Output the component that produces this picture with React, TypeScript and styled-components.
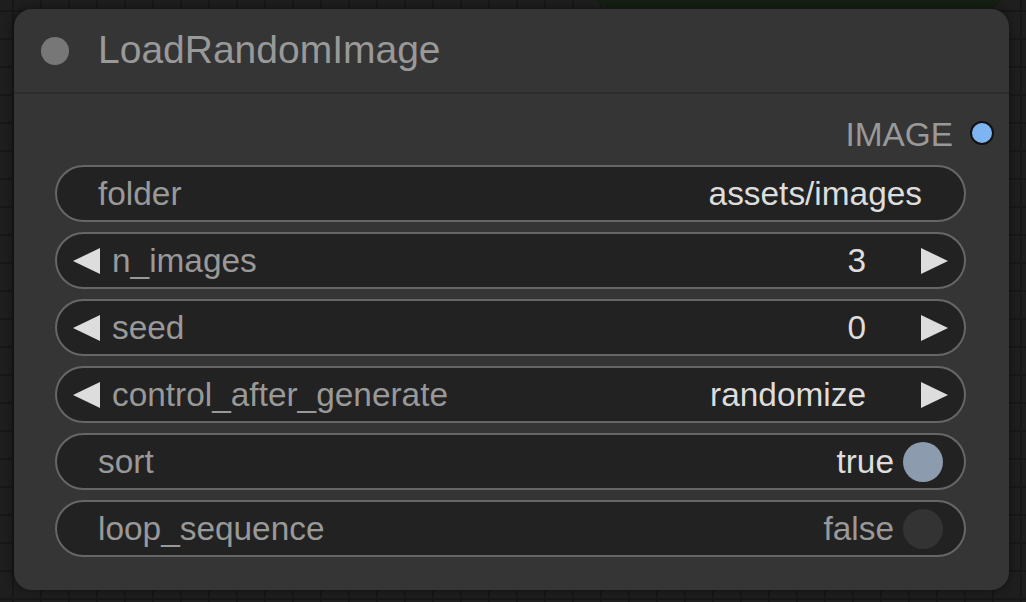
import React from "react";
import styled, { createGlobalStyle } from "styled-components";

const Global = createGlobalStyle`
  html, body { margin: 0; padding: 0; background: #1d1d1d; }
  body { width: 1026px; height: 602px; overflow: hidden; font-family: "Liberation Sans", Arial, sans-serif; }
`;

const Canvas = styled.div`
  position: relative;
  width: 1026px;
  height: 602px;
  overflow: hidden;
  background-color: #1e1e1e;
  background-image:
    linear-gradient(#171717 2px, transparent 2px),
    linear-gradient(90deg, #171717 2px, transparent 2px);
  background-size: 28px 28px;
  background-position: 12px 10px;
`;

const OtherNode = styled.div`
  position: absolute;
  left: 597px;
  top: -20px;
  width: 404px;
  height: 28px;
  background: #141f12;
  border-radius: 0 0 12px 12px;
`;

const Node = styled.div`
  position: absolute;
  left: 14px;
  top: 9px;
  width: 995px;
  height: 581px;
  background: #353535;
  border-radius: 18px;
  box-shadow: 0 0 10px rgba(0, 0, 0, 0.45);
  display: flex;
  flex-direction: column;
  overflow: hidden;
`;

const TitleBar = styled.div`
  height: 83px;
  display: flex;
  align-items: center;
  padding-left: 27px;
  gap: 29px;
  border-bottom: 2px solid #2c2c2c;
  flex-shrink: 0;
`;

const TitleDot = styled.div`
  width: 28px;
  height: 28px;
  border-radius: 50%;
  background: #777;
`;

const Title = styled.div`
  color: #999;
  font-size: 39px;
  line-height: 1;
  margin-top: -2px;
`;

const Body = styled.div`
  display: flex;
  flex-direction: column;
  padding: 22px 43px 0 41px;
`;

const OutputRow = styled.div`
  height: 34px;
  display: flex;
  align-items: center;
  justify-content: flex-end;
  gap: 17px;
  margin-right: -28px;
  margin-bottom: 15px;
`;

const OutputLabel = styled.span`
  color: #999;
  font-size: 33.4px;
  position: relative;
  top: 2px;
`;

const OutputDot = styled.div`
  width: 20px;
  height: 20px;
  border-radius: 50%;
  background: #7eb4f2;
  border: 2px solid #111;
`;

const Widgets = styled.div`
  display: flex;
  flex-direction: column;
  gap: 10px;
`;

const Row = styled.div<{ $arrows?: boolean; $toggle?: boolean }>`
  box-sizing: border-box;
  height: 57px;
  border: 2px solid #666;
  border-radius: 29px;
  background: #222;
  display: flex;
  align-items: center;
  padding-left: ${(p) => (p.$arrows ? "16px" : "41px")};
  padding-right: ${(p) => (p.$arrows ? "16px" : p.$toggle ? "21px" : "42px")};
  font-size: 33.4px;
`;

const Label = styled.span`
  color: #999;
  flex: 1;
  white-space: nowrap;
`;

const Value = styled.span<{ $dim?: boolean }>`
  color: ${(p) => (p.$dim ? "#999" : "#ddd")};
  white-space: nowrap;
`;

const Arrow = styled.svg<{ $right?: boolean }>`
  width: 28px;
  height: 28px;
  flex-shrink: 0;
  margin-right: ${(p) => (p.$right ? "0" : "11px")};
  margin-left: ${(p) => (p.$right ? "54px" : "0")};
`;

const Knob = styled.div<{ $on: boolean }>`
  width: 40px;
  height: 40px;
  border-radius: 50%;
  margin-left: 9px;
  background: ${(p) => (p.$on ? "#8d9bae" : "#333")};
`;

const LeftArrow = () => (
  <Arrow viewBox="0 0 28 28">
    <polygon points="0,14 27,1 27,27" fill="#ddd" />
  </Arrow>
);

const RightArrow = () => (
  <Arrow $right viewBox="0 0 28 28">
    <polygon points="1,1 28,14 1,27" fill="#ddd" />
  </Arrow>
);

type W =
  | { kind: "text"; label: string; value: string }
  | { kind: "number"; label: string; value: string }
  | { kind: "toggle"; label: string; on: boolean };

const widgets: W[] = [
  { kind: "text", label: "folder", value: "assets/images" },
  { kind: "number", label: "n_images", value: "3" },
  { kind: "number", label: "seed", value: "0" },
  { kind: "number", label: "control_after_generate", value: "randomize" },
  { kind: "toggle", label: "sort", on: true },
  { kind: "toggle", label: "loop_sequence", on: false },
];

export default function App() {
  return (
    <>
      <Global />
      <Canvas>
        <OtherNode />
        <Node>
          <TitleBar>
            <TitleDot />
            <Title>LoadRandomImage</Title>
          </TitleBar>
          <Body>
            <OutputRow>
              <OutputLabel>IMAGE</OutputLabel>
              <OutputDot />
            </OutputRow>
            <Widgets>
              {widgets.map((w) => {
                if (w.kind === "number") {
                  return (
                    <Row key={w.label} $arrows>
                      <LeftArrow />
                      <Label>{w.label}</Label>
                      <Value>{w.value}</Value>
                      <RightArrow />
                    </Row>
                  );
                }
                if (w.kind === "toggle") {
                  return (
                    <Row key={w.label} $toggle>
                      <Label>{w.label}</Label>
                      <Value $dim={!w.on}>{w.on ? "true" : "false"}</Value>
                      <Knob $on={w.on} />
                    </Row>
                  );
                }
                return (
                  <Row key={w.label}>
                    <Label>{w.label}</Label>
                    <Value>{w.value}</Value>
                  </Row>
                );
              })}
            </Widgets>
          </Body>
        </Node>
      </Canvas>
    </>
  );
}
